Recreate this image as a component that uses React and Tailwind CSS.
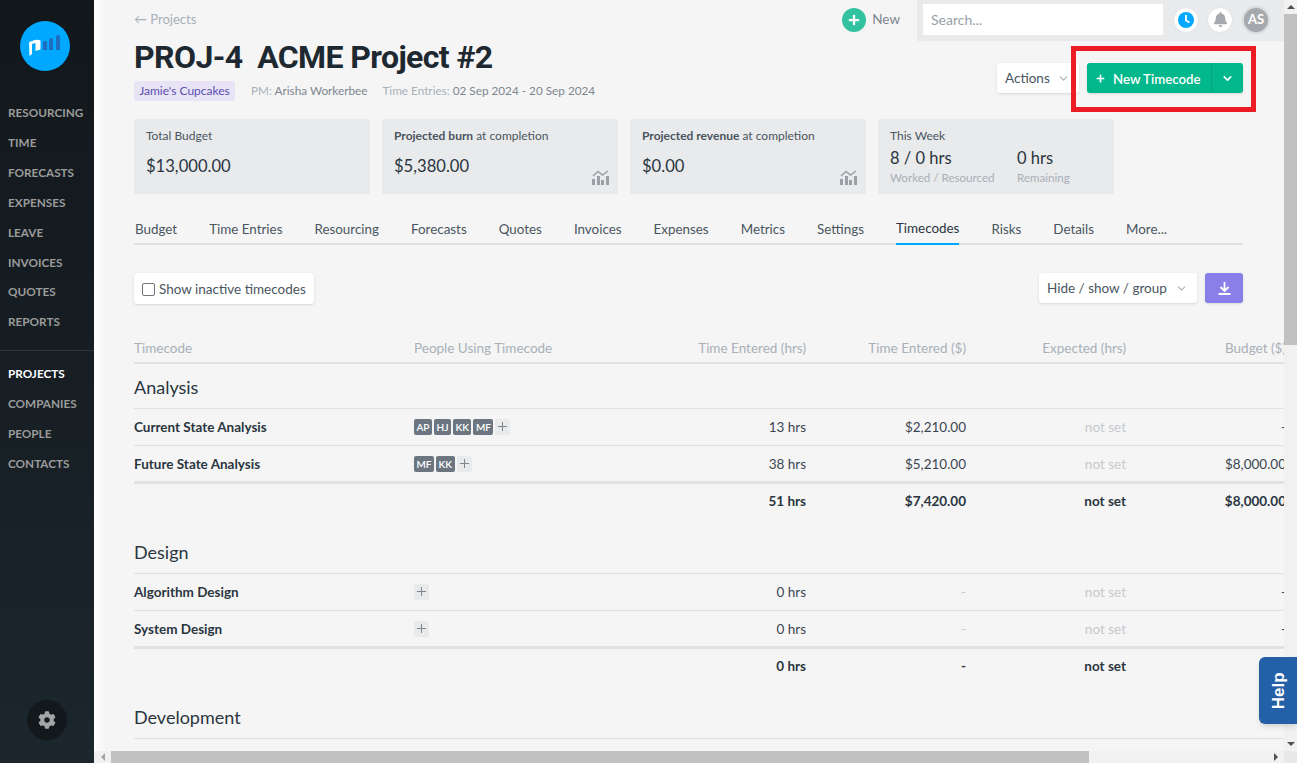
import React from "react";
import { FaBell, FaCog, FaPlus } from "react-icons/fa";
import { ChevronDown } from "lucide-react";

const nav1 = ["RESOURCING","TIME","FORECASTS","EXPENSES","LEAVE","INVOICES","QUOTES","REPORTS"];
const nav2 = ["PROJECTS","COMPANIES","PEOPLE","CONTACTS"];
const tabs = ["Budget","Time Entries","Resourcing","Forecasts","Quotes","Invoices","Expenses","Metrics","Settings","Timecodes","Risks","Details","More..."];
const grid = "grid grid-cols-[280px_232px_160px_160px_160px_160px] items-center";

function ChartIcon() {
  return (
    <svg width="17" height="15" viewBox="0 0 17 15" className="text-[#9aa0a6]" fill="currentColor">
      <rect x="0" y="9" width="3" height="6" /><rect x="5" y="6" width="3" height="9" /><rect x="9" y="10" width="3" height="5" /><rect x="14" y="6" width="3" height="9" />
      <path d="M1 6 L6 1.5 L10.5 5 L16 1" fill="none" stroke="currentColor" strokeWidth="1.4" />
    </svg>
  );
}

function Card({ title, value, chart }) {
  return (
    <div className="relative h-[75px] w-[236px] bg-[#e9eaec] pl-3 pt-[9px]">
      <div className="h-[16px] text-[12px] leading-[16px] text-[#4a5560]">{title}</div>
      <div className="mt-[10px] text-[16.6px] leading-[24px] text-[#2a3540]">{value}</div>
      {chart && <div className="absolute bottom-[9px] right-[9px]"><ChartIcon /></div>}
    </div>
  );
}

function Badges({ items }) {
  return (
    <div className="-mt-px flex items-center gap-[2px]">
      {items.map((b, i) => (
        <span key={i} className="flex h-[16px] items-center rounded-[2px] bg-[#6c7681] px-[2.5px] text-[10px] font-semibold leading-none text-white">{b}</span>
      ))}
      <span className="flex h-[16px] w-[15px] items-center justify-center rounded-[2px] bg-[#e9eaec] text-[#7d868f]"><svg width="9" height="9" viewBox="0 0 9 9" stroke="currentColor" strokeWidth="1"><path d="M4.5 0V9M0 4.5H9" /></svg></span>
    </div>
  );
}

function Row({ name, people, hrs, amt, exp, bud }) {
  return (
    <div className={`${grid} h-[37px] border-b border-[#e0e1e3] text-[13.5px]`}>
      <div className="font-bold text-[#2a3540]">{name}</div>
      <Badges items={people} />
      <div className="text-right text-[#3c4650]">{hrs}</div>
      <div className={`text-right ${amt === "-" ? "text-[#c5c9cd]" : "text-[#3c4650]"}`}>{amt}</div>
      <div className="text-right text-[#c5c9cd]">{exp}</div>
      <div className="text-right text-[#3c4650]">{bud}</div>
    </div>
  );
}

function Total({ hrs, amt, bud }) {
  return (
    <div className={`${grid} -mt-[2px] mb-[12px] h-[36px] border-t-[3px] border-[#e0e1e3] pt-[1px] text-[13.5px] font-bold text-[#2a3540]`}>
      <div /><div />
      <div className="text-right">{hrs}</div>
      <div className="text-right">{amt}</div>
      <div className="text-right">not set</div>
      <div className="text-right">{bud}</div>
    </div>
  );
}

function Heading({ children }) {
  return <div className="flex h-[45px] items-end border-b border-[#e0e1e3] pb-[9px] text-[18px] leading-[24px] text-[#2a3540]">{children}</div>;
}

export default function App() {
  return (
    <div className="relative flex h-[763px] w-[1297px] overflow-hidden bg-[#f5f5f5] font-['Lato',sans-serif] text-[#3c4650]">
      <aside className="flex h-full w-[94px] shrink-0 flex-col bg-gradient-to-b from-[#12171b] to-[#1b262d]">
        <div className="ml-[20px] mt-[21px]">
          <svg width="50" height="50" viewBox="0 0 50 50">
            <circle cx="25" cy="25" r="25" fill="#00a8ff" />
            <path d="M9 22 Q10 20 12 20 L12 33 L9.5 35Z" fill="#fff" />
            <path d="M12 20 Q17 18 20.5 19.5 V28.5 L15.5 30 V22 L12 23Z" fill="#fff" />
            <path d="M23 21 Q25 19 27 21 V29 H23Z" fill="#1f6cc0" />
            <path d="M29 18.5 Q31 16 33 18 V29 H29Z" fill="#1f6cc0" />
            <path d="M36 15.5 Q38 13 40 15 V29 H36Z" fill="#1f6cc0" />
          </svg>
        </div>
        <nav className="mt-[27px] flex flex-col border-b border-[#2a343b] pb-[13px]">
          {nav1.map((n, i) => (
            <a key={n} className={`flex h-[30px] items-center pl-2 text-[11.75px] font-bold text-[#9b9b9b] ${i === 6 ? "-mt-[1px]" : ""}`}>{n}</a>
          ))}
        </nav>
        <nav className="mt-[8px] flex flex-col">
          {nav2.map((n, i) => (
            <a key={n} className={`flex h-[30px] items-center pl-2 text-[11.75px] font-bold ${i === 0 ? "text-white" : "text-[#9b9b9b]"}`}>{n}</a>
          ))}
        </nav>
        <div className="mx-auto mb-[23px] mt-auto flex h-[40px] w-[40px] items-center justify-center rounded-full bg-[#12181c] text-[#a5a5a5]">
          <FaCog size={18} />
        </div>
      </aside>

      <div className="flex min-w-0 flex-1 flex-col">
        <div className="flex min-h-0 flex-1">
          <main className="min-w-0 flex-1 overflow-hidden bg-[linear-gradient(90deg,#ffffff,#f5f5f5_12px)] pl-[40px]">
            <div className="flex h-[41px] items-center">
              <div className="-mt-[2px] flex-1 text-[13px] text-[#a8b0b8]">← Projects</div>
              <div className="-mt-[2px] flex items-center">
                <span className="flex h-[24px] w-[24px] items-center justify-center rounded-full bg-[#33c29f] text-white"><FaPlus size={12} /></span>
                <span className="ml-[6px] text-[13.5px] text-[#7d868f]">New</span>
              </div>
              <div className="ml-[17px] flex h-[41px] w-[367px] items-center bg-[#e9eaec] pb-[2px] pl-[6px]">
                <div className="flex h-[31px] w-[240px] items-center bg-white pl-2 text-[14px] text-[#9aa1a8]">Search...</div>
                <div className="ml-[10px] flex h-[26px] w-[26px] items-center justify-center rounded-full border border-[#e2e3e5] bg-white">
                  <svg width="18" height="18" viewBox="0 0 18 18"><circle cx="9" cy="9" r="8" fill="#00a8ff" /><path d="M9 4 V9.5 L12.5 11.5" fill="none" stroke="#fff" strokeWidth="1.8" /></svg>
                </div>
                <div className="ml-[8px] flex h-[26px] w-[26px] items-center justify-center rounded-full border border-[#e2e3e5] bg-white text-[#a5a9ad]"><FaBell size={15} /></div>
                <div className="ml-[9px] flex h-[28px] w-[28px] items-center justify-center rounded-full border-2 border-[#d9dadc] bg-[#a5a9ad] text-[13px] font-bold text-white">AS</div>
              </div>
            </div>

            <div className="flex justify-between pr-[41px]">
              <div>
                <h1 className="h-[32px] whitespace-pre font-['Roboto',sans-serif] text-[32px] font-bold leading-[32px] tracking-[-0.6px] text-[#1d2830]">PROJ-4  ACME Project #2</h1>
                <div className="mt-[8px] flex h-[20px] items-center text-[11.75px]">
                  <span className="flex h-[20px] w-[101px] items-center justify-center rounded-[2px] bg-[#e8e4f6] text-[12px] text-[#5b4fb0]">Jamie's Cupcakes</span>
                  <span className="ml-[16px] text-[#a8b0b8]">PM: <span className="text-[#7d868f]">Arisha Workerbee</span></span>
                  <span className="ml-[15px] text-[#a8b0b8]">Time Entries: <span className="text-[#7d868f]">02 Sep 2024 - 20 Sep 2024</span></span>
                </div>
              </div>
              <div className="mt-[22px] flex items-start">
                <div className="flex h-[30px] w-[82px] items-center justify-between rounded-[3px] bg-white pl-2 pr-[9px] pt-px text-[13.5px] text-[#4a5560] shadow-sm">Actions<ChevronDown size={13} className="text-[#a8b0b8]" /></div>
                <div className="ml-[8px] flex h-[30px] w-[156px] items-center rounded-[3px] bg-[#00b88c] text-[13.25px] font-semibold text-white shadow-sm">
                  <div className="flex h-full w-[125px] items-center border-r border-[#06a37d] pl-[9px]"><FaPlus size={9} /><span className="ml-[8px] pt-[3px]">New Timecode</span></div>
                  <div className="flex flex-1 justify-center"><ChevronDown size={13} strokeWidth={3} /></div>
                </div>
              </div>
            </div>

            <div className="mt-[18px] flex gap-3">
              <Card title="Total Budget" value="$13,000.00" />
              <Card title={<><b className="font-bold">Projected burn</b> at completion</>} value="$5,380.00" chart />
              <Card title={<><b className="font-bold">Projected revenue</b> at completion</>} value="$0.00" chart />
              <div className="h-[75px] w-[236px] bg-[#e9eaec] pl-3 pt-[9px]">
                <div className="h-[16px] text-[12px] leading-[16px] text-[#4a5560]">This Week</div>
                <div className="mt-[2px] flex">
                  <div className="w-[127px]">
                    <div className="text-[16.5px] leading-[24px] text-[#2a3540]">8 / 0 hrs</div>
                    <div className="text-[11.6px] leading-[16px] text-[#a8b0b8]">Worked / Resourced</div>
                  </div>
                  <div>
                    <div className="text-[16.5px] leading-[24px] text-[#2a3540]">0 hrs</div>
                    <div className="text-[11.6px] leading-[16px] text-[#a8b0b8]">Remaining</div>
                  </div>
                </div>
              </div>
            </div>

            <div className="mr-[41px] mt-[20px] flex h-[31px] gap-[32px] border-b-2 border-[#e0e1e3] pl-px text-[13.4px] text-[#4a5560]">
              {tabs.map((t) => (
                <div key={t} className={`-mb-[2px] flex h-[31px] items-center ${t === "Timecodes" ? "border-b-2 border-[#00a8ff] text-[#2a3540]" : ""}`}>{t}</div>
              ))}
            </div>

            <div className="mt-[28px] flex items-start justify-between pr-[41px]">
              <label className="flex h-[31px] w-[180px] items-center rounded-[3px] bg-white pl-2 pt-px text-[13.5px] text-[#4a5560] shadow-sm">
                <span className="h-[13px] w-[13px] rounded-[2px] border border-[#767676] bg-white" />
                <span className="ml-[4px]">Show inactive timecodes</span>
              </label>
              <div className="flex gap-2">
                <div className="flex h-[30px] w-[158px] items-center justify-between rounded-[3px] bg-white pl-2 pr-[9px] pt-px text-[13.5px] text-[#4a5560] shadow-sm">Hide / show / group<ChevronDown size={13} className="text-[#a8b0b8]" /></div>
                <div className="flex h-[30px] w-[38px] items-center justify-center rounded-[3px] bg-[#8a7fe8] text-white shadow-sm">
                  <svg width="13" height="13" viewBox="0 0 13 13" fill="none" stroke="currentColor" strokeWidth="1.8"><path d="M6.5 0V8.5M2.5 5L6.5 9L10.5 5M0.5 12H12.5" /></svg>
                </div>
              </div>
            </div>

            <div className={`${grid} mt-[30px] h-[30px] border-b-2 border-[#e0e1e3] text-[13.5px] text-[#a8b0b8]`}>
              <div>Timecode</div>
              <div>People Using Timecode</div>
              <div className="text-right">Time Entered (hrs)</div>
              <div className="text-right">Time Entered ($)</div>
              <div className="text-right">Expected (hrs)</div>
              <div className="text-right">Budget ($)</div>
            </div>

            <Heading>Analysis</Heading>
            <Row name="Current State Analysis" people={["AP","HJ","KK","MF"]} hrs="13 hrs" amt="$2,210.00" exp="not set" bud="-" />
            <Row name="Future State Analysis" people={["MF","KK"]} hrs="38 hrs" amt="$5,210.00" exp="not set" bud="$8,000.00" />
            <Total hrs="51 hrs" amt="$7,420.00" bud="$8,000.00" />

            <Heading>Design</Heading>
            <Row name="Algorithm Design" people={[]} hrs="0 hrs" amt="-" exp="not set" bud="-" />
            <Row name="System Design" people={[]} hrs="0 hrs" amt="-" exp="not set" bud="-" />
            <Total hrs="0 hrs" amt="-" bud="-" />

            <Heading>Development</Heading>
          </main>

          <div className="flex w-[13px] shrink-0 flex-col bg-[#f1f1f1]">
            <div className="flex h-[14px] items-center justify-center"><span className="h-0 w-0 border-x-[4px] border-b-[4px] border-x-transparent border-b-[#505050]" /></div>
            <div className="h-[331px] bg-[#c1c1c1]" />
            <div className="mt-auto flex h-[14px] items-center justify-center"><span className="h-0 w-0 border-x-[4px] border-t-[4px] border-x-transparent border-t-[#505050]" /></div>
          </div>
        </div>

        <div className="flex h-[12px] shrink-0 bg-[#f1f1f1]">
          <div className="flex w-[17px] items-center justify-center"><span className="h-0 w-0 border-y-[4px] border-r-[4px] border-y-transparent border-r-[#a3a3a3]" /></div>
          <div className="w-[978px] bg-[#c1c1c1]" />
          <div className="ml-auto flex w-[16px] items-center justify-center"><span className="h-0 w-0 border-y-[4px] border-l-[4px] border-y-transparent border-l-[#505050]" /></div>
          <div className="w-[13px] bg-[#e8e8e8]" />
        </div>
      </div>

      <div className="absolute left-[1259px] top-[657px] flex h-[67px] w-[38px] items-center justify-center rounded-l-[6px] bg-[#2460a7] shadow-md">
        <span className="-rotate-90 font-['Liberation_Sans',sans-serif] text-[17px] font-bold text-white">Help</span>
      </div>
      <div className="absolute left-[1071px] top-[46px] h-[66px] w-[185px] border-[5px] border-[#ed1c24]" />
    </div>
  );
}
